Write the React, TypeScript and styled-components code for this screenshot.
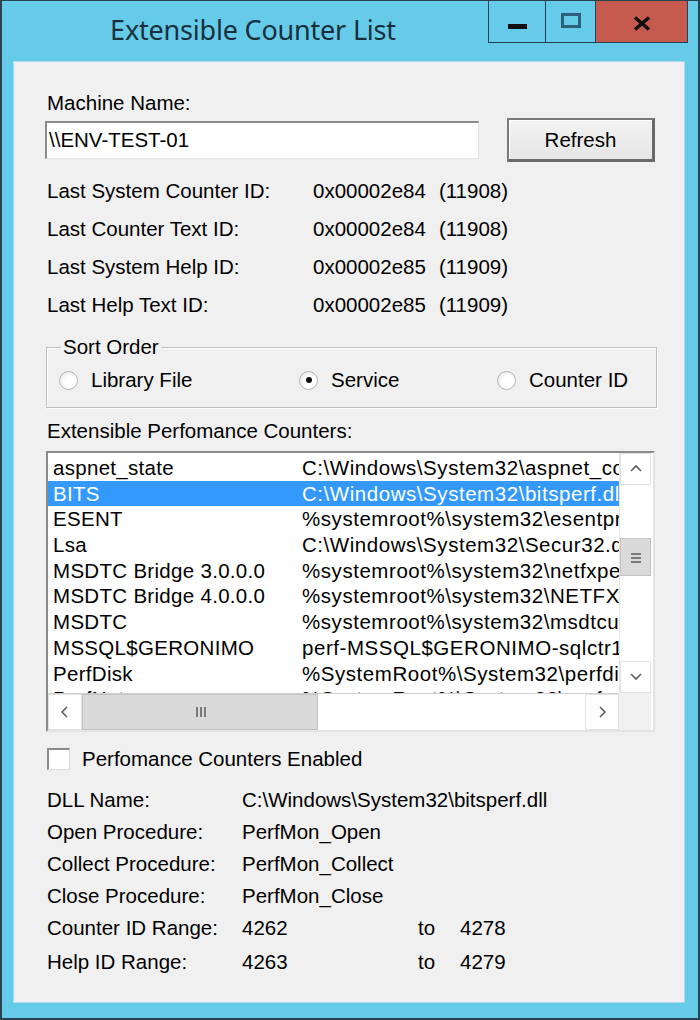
import React from "react";
import styled, { createGlobalStyle } from "styled-components";

const FONT = `"Liberation Sans", Arial, sans-serif`;

const GlobalStyle = createGlobalStyle`
  html, body { margin: 0; padding: 0; background: #ffffff; }
  body { font-family: ${FONT}; font-size: 20.5px; color: #000; }
  * { box-sizing: border-box; }
`;

const Window = styled.div`
  width: 700px;
  height: 1020px;
  background: #66cbe9;
  border: 2px solid #2a4350;
  border-top-width: 1px;
  display: flex;
  flex-direction: column;
`;

const TitleBar = styled.div`
  height: 60px;
  display: flex;
  align-items: flex-start;
  flex-shrink: 0;
`;

const Title = styled.div`
  flex: 1;
  padding-left: 15px;
  text-align: center;
  line-height: 58px;
  font-family: "Noto Sans", "Open Sans", sans-serif;
  font-size: 27px;
  letter-spacing: -0.2px;
  color: #18303c;
`;

const CaptionGroup = styled.div`
  display: flex;
  margin-top: -1px;
  margin-right: 10px;
`;

const CaptionButton = styled.div<{ $w: number; $bg: string }>`
  width: ${(p) => p.$w}px;
  height: 43px;
  margin-left: -1px;
  background: ${(p) => p.$bg};
  border: 1px solid #244250;
  display: flex;
  justify-content: center;
  align-items: flex-start;
`;

const MinGlyph = styled.div`
  width: 19px;
  height: 5px;
  margin-top: 23px;
  background: #111;
`;

const MaxGlyph = styled.div`
  width: 20px;
  height: 15px;
  margin-top: 12px;
  border: 3px solid #2d6078;
`;

const CloseGlyph = styled.svg`
  margin-top: 15px;
`;

const Client = styled.div`
  flex: 1;
  margin: 0 13px 15px 11px;
  background: #f0f0f0;
  border: 1px solid #a8dbed;
  padding: 29px 0 0 31px;
  display: flex;
  flex-direction: column;
  align-items: flex-start;
`;

const Label = styled.div`
  line-height: 24px;
  padding-left: 2px;
  white-space: nowrap;
`;

const MachineRow = styled.div`
  display: flex;
  align-items: center;
  height: 44px;
  margin-top: 3px;
`;

const TextBox = styled.div`
  width: 434px;
  height: 38px;
  background: #fff;
  border-style: solid;
  border-width: 2px 1px 1px 2px;
  border-color: #8b8b8b #e3e3e3 #e3e3e3 #8b8b8b;
  padding-left: 2px;
  line-height: 34px;
  white-space: nowrap;
`;

const Button = styled.div`
  width: 148px;
  height: 44px;
  margin-left: 28px;
  background: linear-gradient(#f3f3f3, #e6e6e6);
  border-style: solid;
  border-width: 2px 3px 3px 2px;
  border-color: #7a7a7a #6a6a6a #6a6a6a #7a7a7a;
  box-shadow: inset 1px 1px 0 #ffffff;
  display: flex;
  align-items: center;
  justify-content: center;
  line-height: 24px;
`;

const InfoGrid = styled.div`
  display: grid;
  grid-template-columns: 266px auto;
  grid-auto-rows: 38px;
  align-items: center;
  margin-top: 10px;
  padding-left: 2px;
  white-space: nowrap;
`;

const Dec = styled.span`
  margin-left: 13px;
`;

const SortGroup = styled.fieldset`
  width: 611px;
  margin: 11px 0 0 1px;
  padding: 9px 0 15px 12px;
  border: 1px solid #bdbdbd;
  box-shadow: 1px 1px 0 #ffffff, inset 1px 1px 0 #ffffff;
  min-width: 0;
`;

const Legend = styled.legend`
  padding: 0 2px;
  margin-left: 2px;
  line-height: 24px;
`;

const RadioRow = styled.div`
  display: grid;
  grid-template-columns: 240px 198px auto;
  height: 24px;
  align-items: center;
`;

const RadioItem = styled.label`
  display: flex;
  align-items: center;
  gap: 13px;
  white-space: nowrap;
  line-height: 24px;
`;

const RadioCircle = styled.span<{ $checked?: boolean }>`
  width: 19px;
  height: 19px;
  border-radius: 50%;
  border: 1px solid #b4b4b4;
  background: radial-gradient(circle at 62% 62%, #ffffff 35%, #e2e2e2 100%);
  display: flex;
  align-items: center;
  justify-content: center;
  &::after {
    content: "";
    width: 6px;
    height: 6px;
    border-radius: 50%;
    background: ${(p) => (p.$checked ? "#111" : "transparent")};
  }
`;

const SectionLabel = styled(Label)`
  margin-top: 11px;
`;

const ListBox = styled.div`
  width: 609px;
  height: 281px;
  margin-top: 8px;
  margin-left: 1px;
  background: #fff;
  border-style: solid;
  border-width: 2px;
  border-color: #8a8a8a #e3e3e3 #e3e3e3 #8a8a8a;
  padding-right: 2px;
  display: grid;
  grid-template-columns: 1fr 32px;
  grid-template-rows: 1fr 37px;
`;

const ListContent = styled.div`
  overflow: hidden;
  padding-top: 2px;
`;

const ListRow = styled.div<{ $selected?: boolean }>`
  display: grid;
  grid-template-columns: 249px 1fr;
  height: 25.7px;
  line-height: 25.7px;
  padding-left: 5px;
  white-space: nowrap;
  background: ${(p) => (p.$selected ? "#3399ff" : "transparent")};
  color: ${(p) => (p.$selected ? "#ffffff" : "#000000")};
`;

const Cell = styled.span<{ $spacing?: number }>`
  overflow: hidden;
  letter-spacing: ${(p) => p.$spacing ?? 0}px;
`;

const VScroll = styled.div`
  display: flex;
  flex-direction: column;
  background: #fff;
  border-left: 1px solid #e6e6e6;
`;

const ArrowBox = styled.div<{ $w?: number; $h?: number }>`
  width: ${(p) => (p.$w ? `${p.$w}px` : "100%")};
  height: ${(p) => (p.$h ? `${p.$h}px` : "100%")};
  flex-shrink: 0;
  display: flex;
  align-items: center;
  justify-content: center;
  background: #fff;
  border: 1px solid #e2e2e2;
`;

const VTrack = styled.div`
  flex: 1;
  display: flex;
  flex-direction: column;
  padding-top: 53px;
`;

const VThumb = styled.div`
  height: 38px;
  background: #dadada;
  border: 1px solid #c2c2c2;
  display: flex;
  align-items: center;
  justify-content: center;
`;

const HScroll = styled.div`
  display: flex;
  background: #fff;
  border-top: 1px solid #d0d0d0;
`;

const HThumb = styled.div`
  width: 236px;
  background: #dadada;
  border: 1px solid #c2c2c2;
  display: flex;
  align-items: center;
  justify-content: center;
`;

const HTrack = styled.div`
  flex: 1;
`;

const Corner = styled.div`
  background: #f0f0f0;
`;

const CheckRow = styled.label`
  display: flex;
  align-items: center;
  gap: 12px;
  height: 24px;
  margin-top: 15px;
  padding-left: 2px;
  white-space: nowrap;
`;

const CheckBox = styled.span`
  width: 23px;
  height: 22px;
  background: #fff;
  border-style: solid;
  border-width: 2px 1px 1px 2px;
  border-color: #8a8a8a #dcdcdc #dcdcdc #8a8a8a;
`;

const DetailGrid = styled.div`
  display: grid;
  grid-template-columns: 195px 176px 42px auto;
  grid-template-rows: repeat(5, 32px) 36px;
  align-items: center;
  margin-top: 13px;
  padding-left: 2px;
  white-space: nowrap;
`;

const Chevron = ({ dir }: { dir: "up" | "down" | "left" | "right" }) => {
  const pts: Record<string, string> = {
    up: "1,8 6,3 11,8",
    down: "1,3 6,8 11,3",
    left: "8,1 3,6 8,11",
    right: "4,1 9,6 4,11",
  };
  return (
    <svg width="12" height="12" viewBox="0 0 12 12">
      <polyline points={pts[dir]} fill="none" stroke="#5e5e5e" strokeWidth="1.6" />
    </svg>
  );
};

const GripV = () => (
  <svg width="12" height="11" viewBox="0 0 12 11">
    <rect x="1" y="1" width="10" height="2" fill="#7a7a7a" />
    <rect x="1" y="5" width="10" height="2" fill="#7a7a7a" />
    <rect x="1" y="9" width="10" height="2" fill="#7a7a7a" />
  </svg>
);

const GripH = () => (
  <svg width="11" height="12" viewBox="0 0 11 12">
    <rect x="1" y="1" width="2" height="10" fill="#7a7a7a" />
    <rect x="5" y="1" width="2" height="10" fill="#7a7a7a" />
    <rect x="9" y="1" width="2" height="10" fill="#7a7a7a" />
  </svg>
);

const counters: [string, string][] = [
  ["aspnet_state", "C:\\Windows\\System32\\aspnet_counters.dll"],
  ["BITS", "C:\\Windows\\System32\\bitsperf.dll"],
  ["ESENT", "%systemroot%\\system32\\esentprf.dll"],
  ["Lsa", "C:\\Windows\\System32\\Secur32.dll"],
  ["MSDTC Bridge 3.0.0.0", "%systemroot%\\system32\\netfxperf.dll"],
  ["MSDTC Bridge 4.0.0.0", "%systemroot%\\system32\\NETFXPerf.dll"],
  ["MSDTC", "%systemroot%\\system32\\msdtcuiu.dll"],
  ["MSSQL$GERONIMO", "perf-MSSQL$GERONIMO-sqlctr11.dll"],
  ["PerfDisk", "%SystemRoot%\\System32\\perfdisk.dll"],
  ["PerfNet", "%SystemRoot%\\System32\\perfnet.dll"],
];

const info: [string, string, string][] = [
  ["Last System Counter ID:", "0x00002e84", "(11908)"],
  ["Last Counter Text ID:", "0x00002e84", "(11908)"],
  ["Last System Help ID:", "0x00002e85", "(11909)"],
  ["Last Help Text ID:", "0x00002e85", "(11909)"],
];

export default function App() {
  return (
    <>
      <GlobalStyle />
      <Window>
        <TitleBar>
          <Title>Extensible Counter List</Title>
          <CaptionGroup>
            <CaptionButton $w={58} $bg="#66cbe9">
              <MinGlyph />
            </CaptionButton>
            <CaptionButton $w={51} $bg="#66cbe9">
              <MaxGlyph />
            </CaptionButton>
            <CaptionButton $w={93} $bg="#c75a4f">
              <CloseGlyph width="20" height="15" viewBox="0 0 20 15">
                <line x1="3" y1="1.5" x2="17" y2="13.5" stroke="#111" strokeWidth="3.6" />
                <line x1="17" y1="1.5" x2="3" y2="13.5" stroke="#111" strokeWidth="3.6" />
              </CloseGlyph>
            </CaptionButton>
          </CaptionGroup>
        </TitleBar>
        <Client>
          <Label>Machine Name:</Label>
          <MachineRow>
            <TextBox>\\ENV-TEST-01</TextBox>
            <Button>Refresh</Button>
          </MachineRow>
          <InfoGrid>
            {info.map(([l, h, d]) => (
              <React.Fragment key={l}>
                <span>{l}</span>
                <span>
                  {h}
                  <Dec>{d}</Dec>
                </span>
              </React.Fragment>
            ))}
          </InfoGrid>
          <SortGroup>
            <Legend>Sort Order</Legend>
            <RadioRow>
              <RadioItem>
                <RadioCircle />
                Library File
              </RadioItem>
              <RadioItem>
                <RadioCircle $checked />
                Service
              </RadioItem>
              <RadioItem>
                <RadioCircle />
                Counter ID
              </RadioItem>
            </RadioRow>
          </SortGroup>
          <SectionLabel>Extensible Perfomance Counters:</SectionLabel>
          <ListBox>
            <ListContent>
              {counters.map(([n, p]) => (
                <ListRow key={n} $selected={n === "BITS"}>
                  <Cell $spacing={0.3}>{n}</Cell>
                  <Cell $spacing={0.55}>{p}</Cell>
                </ListRow>
              ))}
            </ListContent>
            <VScroll>
              <ArrowBox $h={32}>
                <Chevron dir="up" />
              </ArrowBox>
              <VTrack>
                <VThumb>
                  <GripV />
                </VThumb>
              </VTrack>
              <ArrowBox $h={32}>
                <Chevron dir="down" />
              </ArrowBox>
            </VScroll>
            <HScroll>
              <ArrowBox $w={34}>
                <Chevron dir="left" />
              </ArrowBox>
              <HThumb>
                <GripH />
              </HThumb>
              <HTrack />
              <ArrowBox $w={34}>
                <Chevron dir="right" />
              </ArrowBox>
            </HScroll>
            <Corner />
          </ListBox>
          <CheckRow>
            <CheckBox />
            Perfomance Counters Enabled
          </CheckRow>
          <DetailGrid>
            <span>DLL Name:</span>
            <span>C:\Windows\System32\bitsperf.dll</span>
            <span />
            <span />
            <span>Open Procedure:</span>
            <span>PerfMon_Open</span>
            <span />
            <span />
            <span>Collect Procedure:</span>
            <span>PerfMon_Collect</span>
            <span />
            <span />
            <span>Close Procedure:</span>
            <span>PerfMon_Close</span>
            <span />
            <span />
            <span>Counter ID Range:</span>
            <span>4262</span>
            <span>to</span>
            <span>4278</span>
            <span>Help ID Range:</span>
            <span>4263</span>
            <span>to</span>
            <span>4279</span>
          </DetailGrid>
        </Client>
      </Window>
    </>
  );
}
